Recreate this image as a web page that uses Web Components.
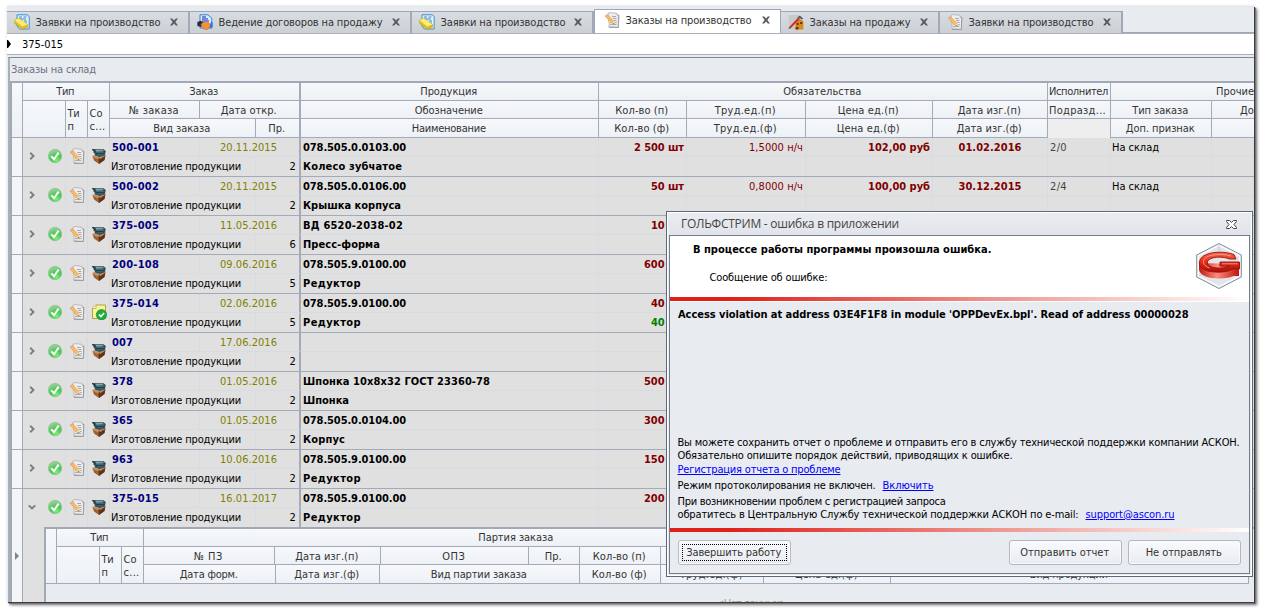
<!DOCTYPE html>
<html lang="ru">
<head>
<meta charset="utf-8">
<title>Заказы на производство</title>
<style>
html,body{margin:0;padding:0;background:#fff;overflow:hidden}
body{width:1261px;height:609px;font:11px/13px "DejaVu Sans Condensed","DejaVu Sans",sans-serif;font-stretch:condensed;color:#333}
</style>
</head>
<body>
<app-window></app-window>
<script>
const define = (name, render) => customElements.define(name, class extends HTMLElement {
  connectedCallback() {
    if (this.shadowRoot) return;
    this.attachShadow({mode: 'open'}).innerHTML = render(this);
  }
});

/* Text label tracked to a fixed advance width. */
customElements.define('x-text', class extends HTMLElement {
  connectedCallback() {
    if (this.shadowRoot) return;
    const root = this.attachShadow({mode: 'open'});
    root.innerHTML = '<style>:host{display:inline-block;white-space:pre;flex:none}span{display:inline-block;text-decoration:inherit}</style><span><slot></slot></span>';
    const w = +this.getAttribute('w'), n = this.textContent.length, s = root.querySelector('span');
    if (!w) return;
    s.style.letterSpacing = ((w - s.getBoundingClientRect().width) / n) + 'px';
    this.style.width = w + 'px';
  }
});
const T = (s, w, cls = '') => `<x-text w="${w}" class="${cls}">${s.replace(/</g, '&lt;')}</x-text>`;

const ICONS = {
  check: `<defs><radialGradient id="g" cx=".62" cy=".85" r=".9"><stop offset="0" stop-color="#7df07a"/><stop offset=".45" stop-color="#4cc653"/><stop offset="1" stop-color="#a9d2ab"/></radialGradient></defs><circle cx="8" cy="8" r="6.7" fill="url(#g)" stroke="#6fbd73" stroke-width=".5"/><path d="M4.400 8.300 7 11.200 11.600 4.600" fill="none" stroke="#fff" stroke-width="2"/>`,
  paper: `<path d="M4 1.200 6 .6 13 1.300 13 3 15 3.400 14.400 15.400 4.500 14.600 5.200 13.400Z" fill="#ededed" stroke="#b0b0b0" stroke-width=".8"/><path d="M13.500 3.200h1.200L14.300 15.500H5" fill="none" stroke="#9a9a9a" stroke-width=".9"/><path d="M8 4.500h4M9 6.500h3.500M10 8.500h2.500M6.500 10.600h1M10.800 10.600h2M6 12.600h6.500" stroke="#a2a2a2" stroke-width=".9"/><path d="M1.100 4.100 3.400 2.500 9.500 9 10.100 12 7.300 10.900Z" fill="#f8bd62" stroke="#dd8a35" stroke-width=".5"/><path d="m1.100 4.100 2.300-1.600 1 1.100-2.200 1.700Z" fill="#eba79b"/><path d="m7.900 10.400 1.800-1 .3 2.600Z" fill="#f7e3bd"/><path d="m9.200 11.600.9.600v-1.200Z" fill="#333"/>`,
  box: `<path d="M1.500 8.500 7 9.500l7.500-3-1 5.500L8 16 3 12.500Z" fill="#9c6233"/><path d="m7.500 10 .5 6 5.500-4 .9-4.500Z" fill="#5e3418"/><path d="M1 8.500 3 7l5 2-.8 2.500ZM14.800 7.300 13 6 8 9l1 2.200Z" fill="#c98d5c"/><path d="M1 1.300 3.500 .9 4.500 1.300 12.500 1.200 14.800 3 13.800 7.300 8.500 9 4 7.500 3 3.500Z" fill="#2c4f5c"/><path d="M4.500 2h7l1.500 1.300-7.500.4Z" fill="#7ca5ae"/><path d="M5.200 4.900h7.300M5.600 6.600h6.500" stroke="#5b8792" stroke-width=".8"/><path d="M5 5.800h7.500" stroke="#142e39" stroke-width=".9"/><path d="m1 1.500 2.200 1v2.500" fill="none" stroke="#1d2a30"/>`,
  note: `<path d="M1.500 4 5 1h9.500v13.500h-13Z" fill="#fbf39b" stroke="#b2a046"/><path d="M1.500 4.500H5V1" fill="#fffbd4" stroke="#b2a046" stroke-width=".7"/><circle cx="10.500" cy="10.700" r="5.200" fill="#1caf39" stroke="#12812b" stroke-width=".6"/><path d="m7.900 10.500 2 2.100 3.200-3.700" fill="none" stroke="#fff" stroke-width="1.600"/>`,
  request: `<path d="M3 .8h10.500l1.700 2V15H5.500L3 12Z" fill="#e3f1fc" stroke="#3b8ed0" stroke-width="1"/><path d="M5 3h3M9.500 3h3M5 5h7M10 7h3M11 9h2M11 11h2" stroke="#3d8acb" stroke-width="1"/><path d="M.6 6.200 4.300 4.200 13.600 10.500v2.800L8.400 15.300.8 9.500Z" fill="#dcbd22" stroke="#c5a313" stroke-width=".6"/><path d="M.6 6.200 4.300 4.200 13.600 10.500 8.200 12.500Z" fill="#ffec70"/>`,
  contract: `<path d="M3 .8h8l3.800 3.400V14H3Z" fill="#d8ecfd" stroke="#3380d2"/><path d="M5 3h4M5 5h6M5 7h7" stroke="#1420b4" stroke-width="1.100"/><path d="M.3 8 4 6.800 7 9 4.400 13 .4 12Z" fill="#252c3b"/><path d="m14 8 1.600.4v4.800L12 14Z" fill="#2874d2"/><path d="M4 10.600C5 8 9 7.500 12 9c2 2 1.300 5-2 6.500-3 .4-5-1.500-6-4.900Z" fill="#f5913d" stroke="#c85e15" stroke-width=".6"/>`,
  sale: `<path d="M.8 1h9l3 3v11h-12Z" fill="#c9c9c9"/><path d="m9.500 3.500 2.400-2 3.300 3.200-1.300.7-2-1.300-1.200 1.200Z" fill="#52565c"/><path d="M8 8.500 11.400 5 15.400 7v8.600H6.500Z" fill="#d98b1a"/><path d="M8.600 9h2v2h-2zM12.200 8h2v2h-2zM8 13h2.400v2.500H8z" fill="#593410"/><path d="M1.200 12.900 10 3.800l1.600 1.400-9 9Z" fill="#c92d30"/><path d="m1.200 12.900 1.400 1.300-2 .5Z" fill="#333"/>`,
  close: `<path d="M4 4.500h2.200L8 6.500l1.800-2H12L9.300 8 12 11.500H9.800L8 9.500l-1.800 2H4L6.700 8Z" fill="#565b61"/>`,
  right: `<path d="m6.200 4.800 3.300 3.200-3.300 3.200" fill="none" stroke="#777e8a" stroke-width="1.900"/>`,
  down: `<path d="M4.800 6.300 8 9.500l3.200-3.200" fill="none" stroke="#777e8a" stroke-width="1.900"/>`
};
define('x-icon', el => `<style>:host{display:block;width:16px;height:16px;flex:none}svg{display:block}</style><svg width="16" height="16" viewBox="0 0 16 16">${ICONS[el.getAttribute('name')]}</svg>`);
const I = n => `<x-icon name="${n}"></x-icon>`;

define('doc-tab', el => `<style>
:host{display:flex;box-sizing:border-box;align-items:center;height:22px;margin-top:2px;padding:0 6px 1px 7px;background:linear-gradient(#d9dde2,#cbd0d5);border-top:1px solid #9ea7b5;border-right:2px solid #a1a9b8;color:#333;flex:none}
:host([on]){height:24px;margin-top:0;background:#fff;border:1px solid #9ea7b5;border-bottom:0;padding:0 6px 3px 9px}
::slotted(x-text){margin-left:5.500px}.sp{flex:1}
</style>${I(el.getAttribute('icon'))}<slot></slot><span class="sp"></span>${I('close')}`);

define('tab-strip', () => {
  const tab = (w, icon, text, tw, on = '') => `<doc-tab ${on} icon="${icon}" style="width:${w}px">${T(text, tw)}</doc-tab>`;
  return `<style>:host{display:flex;height:24px;padding-top:2px;box-sizing:content-box}.rest{flex:1;border-bottom:1px solid #a1a9b8;height:23px}</style>
  ${tab(183,'request','Заявки на производство',125)}${tab(222,'contract','Ведение договоров на продажу',164)}${tab(182,'request','Заявки на производство',125)}${tab(187,'paper','Заказы на производство',126,'on')}${tab(159,'sale','Заказы на продажу',101)}${tab(183,'paper','Заявки на производство',125)}<span class="rest"></span>`;
});

const CELL = `.h{box-sizing:border-box;display:flex;align-items:center;justify-content:center;padding-right:1.500px;border-right:1px solid #a3abb8;border-bottom:1px solid #a3abb8;background:linear-gradient(#f6f8fb,#edf1f5);overflow:hidden;color:#333}.h.l{justify-content:flex-start;padding-left:1px}.h.two{flex-direction:column;align-items:flex-start;padding-left:1.500px;padding-top:2px}.h.mid{padding-top:1px}`;
const COLS = '11px 43px 22px 22px 90px 56px 45px 298px 88px 119px 127px 115px 63px 101px 42px';

define('grid-header', () => {
  const a = (r1, c1, r2, c2, s, w, cls = '') => `<div class="h ${cls} ${r1 === 2 && r2 === 3 ? 'mid' : ''}" style="grid-area:${r1}/${c1}/${r2}/${c2}">${s ? (Array.isArray(s) ? s.map((t, i) => T(t, w[i])).join('') : T(s, w)) : ''}</div>`;
  return `<style>:host{display:grid;grid-template:18px 18px 19px/${COLS};flex:none}${CELL}.t{border-right-width:2px}.no{background:#eee;border-bottom:0}</style>` +
  a(1,1,4,2) + a(1,2,2,5,'Тип',18) + a(2,2,4,3) + a(2,3,4,4,['Ти','п'],[12,6],'two') + a(2,4,4,5,['Со','с...'],[13,16],'two') +
  a(1,5,2,8,'Заказ',29,'t') + a(2,5,3,6,'№ заказа',50) + a(2,6,3,8,'Дата откр.',56,'t') + a(3,5,4,7,'Вид заказа',57) + a(3,7,4,8,'Пр.',17,'t') +
  a(1,8,2,9,'Продукция',57) + a(2,8,3,9,'Обозначение',68) + a(3,8,4,9,'Наименование',74) +
  a(1,9,2,13,'Обязательства',78) + a(2,9,3,10,'Кол-во (п)',53) + a(3,9,4,10,'Кол-во (ф)',55) + a(2,10,3,11,'Труд.ед.(п)',61) + a(3,10,4,11,'Труд.ед.(ф)',63) +
  a(2,11,3,12,'Цена ед.(п)',61) + a(3,11,4,12,'Цена ед.(ф)',63) + a(2,12,3,13,'Дата изг.(п)',63) + a(3,12,4,13,'Дата изг.(ф)',65) +
  a(1,13,2,14,'Исполнител',59,'l') + a(2,13,3,14,'Подразд...',57,'l') + a(3,13,4,14,'',0,'no') +
  `<div class="h" style="grid-area:1/14/2/16;justify-content:flex-start;padding-left:105px;border-right:0">${T('Прочие',38)}</div>` +
  a(2,14,3,15,'Тип заказа',56) + a(3,14,4,15,'Доп. признак',69) +
  `<div class="h mid" style="grid-area:2/15/3/16;justify-content:flex-start;padding-left:28px;border-right:0">${T('До',14)}</div><div class="h" style="grid-area:3/15/4/16;border-right:0"></div>`;
});

const ROWS = [
  ['500-001',47,'20.11.2015','2','078.505.0.0103.00',103,'Колесо зубчатое',99,'2 500 шт',50,'1,5000 н/ч','102,00 руб','01.02.2016','2/0'],
  ['500-002',47,'20.11.2015','2','078.505.0.0106.00',103,'Крышка корпуса',98,'50 шт',33,'0,8000 н/ч','100,00 руб','30.12.2015','2/4'],
  ['375-005',47,'11.05.2016','6','ВД 6520-2038-02',100,'Пресс-форма',77,'10 шт',33],
  ['200-108',47,'09.06.2016','5','078.505.9.0100.00',103,'Редуктор',58,'600 шт',40],
  ['375-014',47,'02.06.2016','5','078.505.9.0100.00',103,'Редуктор',58,'40 шт',33],
  ['007',21,'17.06.2016','2','',0,'',0,'',0],
  ['378',21,'01.05.2016','2','Шпонка 10x8x32 ГОСТ 23360-78',187,'Шпонка',46,'500 шт',40],
  ['365',21,'01.05.2016','2','078.505.0.0104.00',103,'Корпус',42,'300 шт',40],
  ['963',21,'10.06.2016','2','078.505.9.0100.00',103,'Редуктор',58,'150 шт',40],
  ['375-015',47,'16.01.2017','2','078.505.9.0100.00',103,'Редуктор',58,'200 шт',40]
];
define('order-row', el => {
  const i = +el.getAttribute('index'), r = ROWS[i], last = i === 9;
  const c = (area, html, cls = '') => `<div class="c ${cls}" style="grid-area:${area}">${html || ''}</div>`;
  return `<style>:host{display:grid;grid-template:19px 19px/${COLS};height:38px;border-bottom:1px solid #a3abb8;background:#e0e0e0;flex:none}:host(:last-of-type){border-bottom:0}
  .c{box-sizing:border-box;border-right:1px solid #d8dbdf;display:flex;align-items:center;padding:0 2px;overflow:hidden;color:#000}
  .top{border-bottom:1px solid #d8dbdf}.r{justify-content:flex-end}.m{justify-content:center}.b{font-weight:bold}.n{color:#000080;font-weight:bold}.d{color:#808000;padding-right:4px}.q{color:#800000}.g{color:#008000}.s{color:#444}
  .t{border-right:2px solid #a3abb8}.ind{background:#f3f5f9;border-right:1px solid #a3abb8}.ic{padding:0 0 2px}.x{padding-left:1px}.y{padding-right:3px}</style>` +
  c('1/1/3/2','','ind') +
  `<div class="c ic" style="grid-area:1/2/3/3;padding-left:1px">${I(last ? 'down' : 'right')}<span style="width:7px"></span>${I('check')}</div>` +
  c('1/3/3/4', I('paper'), 'ic m') + c('1/4/3/5', I(i === 4 ? 'note' : 'box'), 'ic m') +
  c('1/5/2/6', T(r[0], r[1]), 'n top') + c('1/6/2/8', T(r[2], 57), 'm d top t') +
  c('2/5/3/7', T('Изготовление продукции', 130), 'x') + c('2/7/3/8', T(r[3], 6.5), 'r t y') +
  c('1/8/2/9', r[4] && T(r[4], r[5]), 'b top') + c('2/8/3/9', r[6] && T(r[6], r[7]), 'b') +
  c('1/9/2/10', r[8] && T(r[8], r[9]), 'b q r top') + c('2/9/3/10', i === 4 ? T('40 шт', 33) : '', 'b g r') +
  c('1/10/2/11', r[10] && T(r[10], 54), 'q r top') + c('2/10/3/11') +
  c('1/11/2/12', r[11] && T(r[11], 62), 'b q r top') + c('2/11/3/12') +
  c('1/12/2/13', r[12] && T(r[12], 63), 'b q m top') + c('2/12/3/13') +
  c('1/13/2/14', r[13] && T(r[13], 17), 's top') + c('2/13/3/14') +
  c('1/14/2/15', i < 2 ? T('На склад', 47) : '', 'top x') + c('2/14/3/15') + c('1/15/2/16','','top') + c('2/15/3/16');
});

define('detail-grid', () => {
  const h = (w, s, tw) => `<div class="h" style="width:${w}px">${s ? T(s, tw) : ''}</div>`;
  return `<style>:host{display:flex;height:75px;background:#e0e0e0;overflow:hidden}${CELL}
  .ind{width:11px;box-sizing:border-box;background:#f3f5f9;border-right:1px solid #a3abb8;flex:none}
  .ind svg{display:block;margin:24px 0 0 2px}
  .gap{width:21px;flex:none}.box{flex:1;min-width:0;border:2px solid #a1a9b6;border-right:0;border-bottom:0;background:#e8ebf0;overflow:hidden;height:90px}
  .head{display:grid;grid-template:18px 18px 19px/11px 43px 22px 22px 1105px}
  .row{display:flex}.row .h{flex:none;height:100%}.mid .h{padding-top:1px}
  .none{color:#999;padding:13px 0 0 670px}</style>
  <div class="ind"><svg width="6" height="10"><path d="M1 1v8l4-4Z" fill="#7b8290"/></svg></div><div class="gap"></div>
  <div class="box"><div class="head">
  <div class="h" style="grid-area:1/1/4/2"></div><div class="h" style="grid-area:1/2/2/5">${T('Тип',18)}</div><div class="h" style="grid-area:2/2/4/3"></div>
  <div class="h two" style="grid-area:2/3/4/4">${T('Ти',12)}${T('п',6)}</div><div class="h two" style="grid-area:2/4/4/5">${T('Со',13)}${T('с...',16)}</div>
  <div class="row" style="grid-area:1/5">${h(746,'Партия заказа',75)}${h(359)}</div>
  <div class="row mid" style="grid-area:2/5">${h(131,'№ ПЗ',29)}${h(106,'Дата изг.(п)',63)}${h(148,'ОПЗ',23)}${h(51,'Пр.',17)}${h(81,'Кол-во (п)',53)}${h(103)}${h(127)}${h(358)}</div>
  <div class="row" style="grid-area:3/5">${h(132,'Дата форм.',58)}${h(104,'Дата изг.(ф)',65)}${h(200,'Вид партии заказа',96)}${h(81,'Кол-во (ф)',55)}${h(103,'Труд.ед.(ф)',63)}${h(127,'Цена ед.(ф)',63)}${h(358,'Вид продукции',78)}</div>
  </div><div class="none">${T('<Нет данных>',71)}</div></div>`;
});

define('orders-panel', () => `<style>
:host{display:flex;flex-direction:column;border-left:2px solid #a7afbb;border-top:1px solid #7f8896;margin:2px 0 0 1px;flex:1;overflow:hidden;min-height:0}
.cap{height:23px;color:#6b7283;padding-left:1px;display:flex;align-items:center;flex:none}
.grid{border-left:2px solid #a1a9b6;border-top:2px solid #a1a9b6;flex:1;display:flex;flex-direction:column;overflow:hidden;width:1243px}
</style><div class="cap">${T('Заказы на склад',85)}</div><div class="grid"><grid-header></grid-header>${ROWS.map((_, i) => `<order-row index="${i}"></order-row>`).join('')}<detail-grid></detail-grid></div>`);

define('push-button', el => `<style>:host{display:flex;box-sizing:border-box;height:25px;width:113px;border:1px solid #b2b7c1;border-radius:3px;background:linear-gradient(#f9fafc,#e8ebf0);align-items:center;justify-content:center;color:#333;box-shadow:inset 0 0 0 1px #f8f9fb}
:host([focused]){border-color:#b9bbc0}.f{display:flex;align-items:center;justify-content:center;box-sizing:border-box;width:105px;height:17px;padding-right:1.500px}:host([focused]) .f{border:1px dotted #000}</style><span class="f"><slot></slot></span>`);

define('app-logo', () => `<style>:host{display:block;width:48px;height:48px}</style><svg width="48" height="48" viewBox="0 0 48 48"><defs><linearGradient id="a" x2="0" y2="1"><stop offset="0" stop-color="#ff6549"/><stop offset=".5" stop-color="#e52d1a"/><stop offset="1" stop-color="#a80f08"/></linearGradient><linearGradient id="b" x2="1"><stop offset="0" stop-color="#bd190e"/><stop offset=".45" stop-color="#ff8a7c"/><stop offset="1" stop-color="#be160b"/></linearGradient></defs>
<path d="M24 1.500 46.300 13v22L24 46.500 1.700 35V13Z" fill="#f1f3f6" stroke="#7f8b99"/><path d="M24 3.500 44.500 14v20L24 44.500 3.500 34V14Z" fill="#e2e6eb" stroke="#fff"/><path d="M24 3v9M4 34l7-4M44 34l-7-4" stroke="#c3cad3"/>
<path d="M4 21v7c1 5 9 8.500 20 8.500 7 0 11-1 14.500-2.500H44V22Z" fill="url(#b)"/>
<path d="M39 12.500C30 9 15 9.500 8.500 14 1.500 19 3.500 26.500 13 29c8 2 19 1.500 25-2h6.500V20H25v4h9.500c-4 2.500-12.500 2.800-18 1-5-2-5.500-5.700-1.500-8 5-2.500 13.500-2.500 19.500 0H41Z" fill="url(#a)" stroke="#94120a" stroke-width=".9"/><path d="M36 14C28 11.500 16 12 11 15.500c-4.500 3.500-3 8 3.500 10.600M27 21.800h15.500" fill="none" stroke="#ff9b87" stroke-width=".9"/></svg>`);

define('error-dialog', () => `<style>
:host{display:flex;flex-direction:column;box-sizing:border-box;width:587px;height:366px;border:1px solid #5e6978;background:#e8ebf0;box-shadow:inset 0 0 0 1px #fff;padding:1px 2px 2px;color:#000}
.title{height:22px;display:flex;align-items:center;padding:0 12px 0 12px;background:linear-gradient(#e9ecf0,#e1e4ea);font:12px/16px "Open Sans","Noto Sans",sans-serif;font-stretch:normal;color:#444;justify-content:space-between;flex:none}
.client{flex:1;display:flex;flex-direction:column;border:1px solid #727c8a;min-height:0}
.top{background:#fff;height:61px;display:flex;justify-content:space-between;flex:none}
.msg{display:flex;flex-direction:column;align-items:flex-start;padding:7px 0 0 23px}.msg .s{margin:15px 0 0 16.500px}
app-logo{margin:6px 6px 0 0}
.bar{height:4px;background:linear-gradient(90deg,#df2018 0 10%,#ee9a94 58%,#fff);flex:none}.first{border-bottom:1px solid #fff}
.body{padding:6px 0 0 8px;height:226px;box-sizing:border-box;display:flex;flex-direction:column;align-items:flex-start}
.text{margin:115px 0 0 -.5px;display:flex;flex-direction:column;align-items:flex-start}
.b{font-weight:bold}.a{color:#00f;text-decoration:underline}.g1{margin-top:1px}.g3{margin-top:3px}.line{display:flex;gap:7px}
.foot{display:flex;padding:8px 8px 0;gap:6px}.sp{flex:1}
</style><div class="title">${T('ГОЛЬФСТРИМ - ошибка в приложении',218)}<svg width="13" height="12" viewBox="0 0 13 12"><path d="M1.500 2.500h3l2 2 2-2h3v1l-2.500 3 2.500 3v1h-3l-2-2-2 2h-3v-1l2.500-3-2.500-3Z" fill="#fff" stroke="#444" stroke-width="1"/></svg></div>
<div class="client"><div class="top"><div class="msg">${T('В процессе работы программы произошла ошибка.',298.5,'b')}${T('Сообщение об ошибке:',118,'s')}</div><app-logo></app-logo></div>
<div class="bar first"></div>
<div class="body">${T("Access violation at address 03E4F1F8 in module 'OPPDevEx.bpl'. Read of address 00000028",510.5,'b')}
<div class="text">${T('Вы можете сохранить отчет о проблеме и отправить его в службу технической поддержки компании АСКОН.',562)}${T('Обязательно опишите порядок действий, приводящих к ошибке.',335)}${T('Регистрация отчета о проблеме',163,'a g1')}
<div class="line g3">${T('Режим протоколирования не включен.',198)}${T('Включить',51,'a')}</div>
${T('При возникновении проблем с регистрацией запроса',268,'g3')}
<div class="line">${T('обратитесь в Центральную Службу технической поддержки АСКОН по e-mail:',401)}${T('support@ascon.ru',89,'a')}</div></div></div>
<div class="bar"></div>
<div class="foot"><push-button focused>${T('Завершить работу',95)}</push-button><span class="sp"></span><push-button>${T('Отправить отчет',89)}</push-button><push-button>${T('Не отправлять',76)}</push-button></div></div>`);

define('app-window', () => `<style>
:host{display:block;width:1261px;height:609px;padding:6px 0 0 7px;box-sizing:border-box;overflow:hidden;position:relative}
.win{width:1247px;height:596px;display:flex;flex-direction:column;background:#e8ebf0;border-top:1px solid #e3e3e3;box-sizing:border-box;overflow:hidden}
.frame{width:1247px;height:596px;box-shadow:1px 1px 0 #3d3d3d,2px 2px 1px #777,3px 3px 3px rgba(0,0,0,.55),0 0 3px rgba(0,0,0,.12)}
.find{height:20px;background:#fff;border-top:1px solid #a9b0bc;border-bottom:1px solid #a9b0bc;display:flex;align-items:center;color:#000;flex:none}
.find svg{margin-right:10px}
error-dialog{position:absolute;left:666px;top:211px}
</style><div class="frame"><div class="win"><tab-strip></tab-strip><div class="find"><svg width="5" height="8"><path d="M0 0h1l3 4-3 4H0Z"/></svg>${T('375-015',41)}</div><orders-panel></orders-panel></div></div><error-dialog></error-dialog>`);
</script>
</body>
</html>
